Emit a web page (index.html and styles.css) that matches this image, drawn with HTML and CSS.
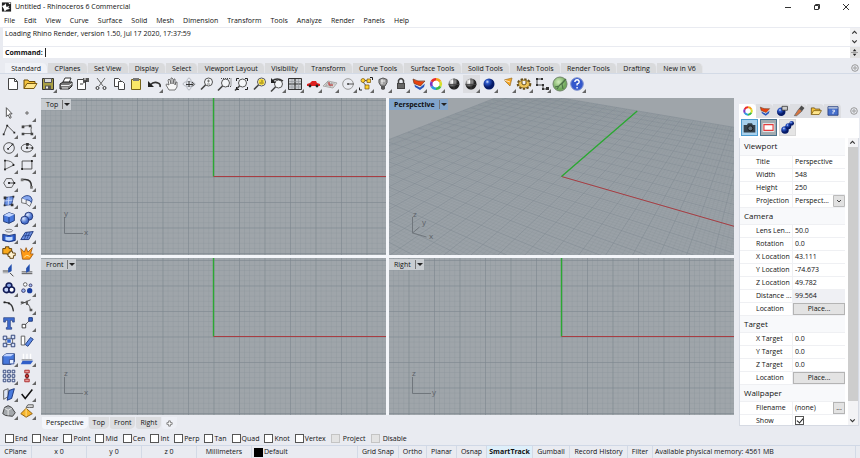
FILE: index.html
```html
<!DOCTYPE html>
<html lang="en">

<head>
  <meta charset="UTF-8">
  <title>Untitled - Rhinoceros 6 Commercial</title>
  <link rel="stylesheet" href="styles.css">
</head>

<body class="app">

  <!-- Shared shapes -->
  <svg class="defs" aria-hidden="true">
    <defs>
      <radialGradient id="g-grey" cx="35%" cy="30%"><stop offset="0" stop-color="#fff"/><stop offset=".5" stop-color="#999"/><stop offset="1" stop-color="#222"/></radialGradient>
      <radialGradient id="g-blue" cx="35%" cy="30%"><stop offset="0" stop-color="#d5e4ff"/><stop offset=".35" stop-color="#2c57c8"/><stop offset="1" stop-color="#061a66"/></radialGradient>
      <radialGradient id="g-soft" cx="35%" cy="30%"><stop offset="0" stop-color="#dce8ff"/><stop offset="1" stop-color="#4a72cd"/></radialGradient>
      <radialGradient id="g-green" cx="40%" cy="35%"><stop offset="0" stop-color="#d2edbb"/><stop offset="1" stop-color="#71a95c"/></radialGradient>
      <pattern id="p-minor" width="5.1" height="5.1" patternUnits="userSpaceOnUse"><path d="M0 0H5.1M0 0V5.1" stroke="#868f96" stroke-width=".5"/></pattern>
      <pattern id="p-major" width="25.5" height="25.5" patternUnits="userSpaceOnUse"><path d="M0 0H25.5M0 0V25.5" stroke="#7b858d" stroke-width="1"/></pattern>
      <symbol id="i-lens" viewBox="0 0 18 18"><circle cx="10.500" cy="7" r="4" fill="#f4f6f8" stroke="#555"/><path d="M7.500 10 3 14.500" stroke="#444" stroke-width="1.600"/></symbol>
      <symbol id="i-wheel" viewBox="0 0 18 18">
        <circle cx="9" cy="9" r="3.500" fill="#fff"/>
        <g fill="none" stroke-width="2.600"><path d="M9 4.200A4.800 4.800 0 0 1 13.200 6.600" stroke="#f5a21c"/><path d="M13.200 6.600A4.800 4.800 0 0 1 13.200 11.400" stroke="#d8e02a"/><path d="M13.200 11.400A4.800 4.800 0 0 1 9 13.800" stroke="#3dbb45"/><path d="M9 13.800A4.800 4.800 0 0 1 4.800 11.400" stroke="#2c9be0"/><path d="M4.800 11.400A4.800 4.800 0 0 1 4.800 6.600" stroke="#7c36c4"/><path d="M4.800 6.600A4.800 4.800 0 0 1 9 4.200" stroke="#ea2a2a"/></g>
      </symbol>
      <symbol id="i-layers" viewBox="0 0 18 18"><path d="M4 8l1 4 5 3 4-3 1-4-5 3z" fill="#2554bb"/><path d="M3 6l1 3.500 6 3 5-4V6l-5 4z" fill="#f4f4f4"/><path d="M3 4q4 3 12 2l-4.500 5L4 8.500z" fill="#e8420e" stroke="#6a3a20" stroke-width=".7"/></symbol>
      <symbol id="i-ball" viewBox="0 0 18 18"><circle cx="9" cy="9" r="5.500" fill="url(#g-grey)"/><path d="M9 3.500v11M3.500 9.500h11" stroke="#444" stroke-width=".8" fill="none"/><path d="M6 5v4M7.500 4.500v4" stroke="#fff" stroke-width=".8"/></symbol>
      <symbol id="i-folder" viewBox="0 0 18 18"><path d="M3 13.500V5h4l1 1.500h6V9" fill="#f5c33b" stroke="#6a4a08"/><path d="M3 13.500 6 8.500h10l-3 5z" fill="#ffe58a" stroke="#7c5a0d"/></symbol>
    </defs>
  </svg>

  <header class="titlebar">
    <svg class="logo" viewBox="0 0 12 12"><path d="M1 1h10v10H1z" fill="#222"/><path d="M1 5q3 0 4-3l1 4 3-1-1 2 2 1-4 1-2 2-1-3zM8 1l1 2 2-1z" fill="#fff"/></svg>
    <h1 class="title">Untitled - Rhinoceros 6 Commercial</h1>
    <div class="window-buttons">
      <button aria-label="Minimize"><svg viewBox="0 0 8 8"><path d="M1 4.500h6"/></svg></button>
      <button aria-label="Restore"><svg viewBox="0 0 8 8"><path d="M1.500 2.500h4v4h-4zM2.500 2.500v-1h4v4h-1"/></svg></button>
      <button aria-label="Close"><svg viewBox="0 0 8 8"><path d="M1 1l6 6M7 1 1 7"/></svg></button>
    </div>
  </header>

  <nav class="menu">
    <a href="#">File</a><a href="#">Edit</a><a href="#">View</a><a href="#">Curve</a><a href="#">Surface</a><a href="#">Solid</a><a href="#">Mesh</a><a href="#">Dimension</a><a href="#">Transform</a><a href="#">Tools</a><a href="#">Analyze</a><a href="#">Render</a><a href="#">Panels</a><a href="#">Help</a>
  </nav>

  <section class="command">
    <div class="history">
      <p>Loading Rhino Render, version 1.50, Jul 17 2020, 17:37:59</p>
      <div class="history-scroll">
        <button aria-label="Scroll up"><svg viewBox="0 0 8 8"><path d="M2 5l2-2 2 2"/></svg></button>
        <button aria-label="Scroll down"><svg viewBox="0 0 8 8"><path d="M2 3l2 2 2-2"/></svg></button>
      </div>
    </div>
    <div class="prompt">
      <label for="command">Command:</label>
      <span class="caret"></span>
      <input id="command" type="text">
      <button class="spinner" aria-label="Command list"><svg viewBox="0 0 8 10"><path d="M2 3.500 4 1l2 2.500zM2 6.500 4 9l2-2.500z" fill="#222"/><path d="M0 5h8" stroke="#999"/></svg></button>
    </div>
  </section>

  <div class="tabs">
    <div class="tab-list">
      <button class="tab tab-active">Standard</button><button class="tab">CPlanes</button><button class="tab">Set View</button><button class="tab">Display</button><button class="tab">Select</button><button class="tab">Viewport Layout</button><button class="tab">Visibility</button><button class="tab">Transform</button><button class="tab">Curve Tools</button><button class="tab">Surface Tools</button><button class="tab">Solid Tools</button><button class="tab">Mesh Tools</button><button class="tab">Render Tools</button><button class="tab">Drafting</button><button class="tab">New in V6</button>
    </div>
    <button class="options" aria-label="Options"><svg viewBox="0 0 10 10"><circle cx="5" cy="5" r="3.300"/><circle cx="5" cy="5" r="1.200"/></svg></button>
  </div>

  <div class="toolbar">
    <button class="tool" aria-label="New"><svg viewBox="0 0 18 18"><path d="M4.500 3.500h6l3 3v8h-9z" fill="#fff" stroke="#444"/><path d="M10.500 3.500v3h3" stroke="#444" fill="none"/></svg></button>
    <button class="tool" aria-label="Open"><svg viewBox="0 0 18 18"><use href="#i-folder"/></svg></button>
    <button class="tool fly" aria-label="Save"><svg viewBox="0 0 18 18"><path d="M3.500 3.500h11v11h-11z" fill="#a99f43" stroke="#333"/><path d="M5.500 3.500h7v4h-7z" fill="#ddd" stroke="#555"/><path d="M6 10.500h6v4H6z" fill="#555"/><path d="M7 11.500h2v2H7z" fill="#eee"/></svg></button>
    <button class="tool" aria-label="Print"><svg viewBox="0 0 18 18"><path d="M6 7 8 3h6l-2 5" fill="#fff" stroke="#333"/><path d="M3 9l3-2h9v4l-3 3H3z" fill="#777" stroke="#222"/><path d="M4 10.500h8l3-2M5 13h6" stroke="#eee" fill="none"/></svg></button>
    <button class="tool" aria-label="Properties"><svg viewBox="0 0 18 18"><path d="M3.500 4.500h8v10h-8z" fill="#fff" stroke="#444"/><path d="M9 3h6v4H9z" fill="#555"/><path d="M9 8 13 6M6 9h3" stroke="#333"/><path d="M10 4h2" stroke="#fff"/></svg></button>
    <button class="tool" aria-label="Cut"><svg viewBox="0 0 18 18"><path d="M5 3l6 8M13 3l-6 8" stroke="#666"/><g fill="none" stroke="#333"><circle cx="5.500" cy="13" r="1.500"/><circle cx="12.500" cy="13" r="1.500"/></g></svg></button>
    <button class="tool" aria-label="Copy"><svg viewBox="0 0 18 18"><g fill="#fff" stroke="#444"><path d="M4.500 3.500h4l2 2v6h-6z"/><path d="M8.500 6.500h4l2 2v6h-6z"/></g></svg></button>
    <button class="tool" aria-label="Paste"><svg viewBox="0 0 18 18"><path d="M4.500 4.500h9v10h-9z" fill="#f9e867" stroke="#76631a"/><path d="M6 3h6v3H6z" fill="#777"/></svg></button>
    <button class="tool fly" aria-label="Undo"><svg viewBox="0 0 18 18"><path d="M5 10q4-4 8-2 3 1 2 4" fill="none" stroke="#333" stroke-width="1.600"/><path d="M3 6v6h6z" fill="#222"/></svg></button>
    <button class="tool" aria-label="Pan"><svg viewBox="0 0 18 18"><path d="M6 15 3 10q0-1 1-1l2 1-1-5 1-1 1 1 1 4V3h1l1 1v5l1-5h1v6l1-3h1v5l-2 3z" fill="#f7f7f7" stroke="#555" stroke-width=".8"/></svg></button>
    <button class="tool" aria-label="Rotate view"><svg viewBox="0 0 18 18"><g fill="none" stroke="#b4b8c0"><ellipse cx="9" cy="9" rx="6" ry="2.500"/><ellipse cx="9" cy="9" rx="2.500" ry="6"/></g><path d="M9 6v6M6 9.500h7M12 7l2 2.500-2 2" fill="none" stroke="#333"/></svg></button>
    <button class="tool" aria-label="Zoom dynamic"><svg viewBox="0 0 18 18"><use href="#i-lens"/><path d="M9 6h3M10.500 4.500v3M9 9h3" stroke="#555" stroke-width=".7"/></svg></button>
    <button class="tool" aria-label="Zoom window"><svg viewBox="0 0 18 18"><path d="M5 3.500h10v8H9" fill="none" stroke="#444" stroke-dasharray="1 1"/><use href="#i-lens" x="-1" y="1"/></svg></button>
    <button class="tool" aria-label="Zoom extents"><svg viewBox="0 0 18 18"><use href="#i-lens" x="-1" y="1"/><path d="M3.500 6V3.500H6M12 3.500h2.500V6M14.500 12v2.500H12M3.500 12v2.500H6" fill="none" stroke="#222"/></svg></button>
    <button class="tool" aria-label="Zoom selected"><svg viewBox="0 0 18 18"><use href="#i-lens"/><circle cx="10.500" cy="7" r="3" fill="#f4d832"/><path d="M8.500 8h4M10 6h2" stroke="#86761d"/></svg></button>
    <button class="tool fly" aria-label="Undo view"><svg viewBox="0 0 18 18"><use href="#i-lens" y="2"/><path d="M4 6q5-4 11 0" fill="none" stroke="#333" stroke-width="1.400"/><path d="M3 3v5h5z" fill="#222"/></svg></button>
    <button class="tool fly" aria-label="Four viewports"><svg viewBox="0 0 18 18"><path d="M2.500 3.500h13v11h-13z" fill="#c9ccd0" stroke="#333"/><path d="M9 3v12M2 9h14" stroke="#333" stroke-width="1.200"/><path d="M6 4v10M12.500 4v10M3 6.500h12M3 12h12" stroke="#92969a" stroke-width=".6"/></svg></button>
    <button class="tool fly" aria-label="Set view"><svg viewBox="0 0 18 18"><path d="M3 9l3-1 2-2h4l1 2 3 1v2H3z" fill="#dd2020"/><circle cx="6" cy="11" r="1.400" fill="#222"/><circle cx="13" cy="11" r="1.400" fill="#222"/></svg></button>
    <button class="tool fly" aria-label="Set CPlane"><svg viewBox="0 0 18 18"><path d="M2 11l5-5 9 2-4 5z" fill="#ddd" stroke="#aaa"/><path d="M4 10l8 1M6 8l8 1M7 6l-2 5M11 7l-2 5" stroke="#999" stroke-width=".6"/><path d="M8 10V7M8 10h4" stroke="#b22"/></svg></button>
    <button class="tool fly" aria-label="Object snap"><svg viewBox="0 0 18 18"><circle cx="9" cy="9" r="5.300" fill="none" stroke="#999"/><path d="M9 9h6" stroke="#555"/><circle cx="9" cy="9" r="1" fill="#444"/></svg></button>
    <button class="tool fly" aria-label="Select"><svg viewBox="0 0 18 18"><path d="M6 5l5 1M6 7l4 5" stroke="#555"/><g fill="#ffd22e" stroke="#77500b" stroke-width=".7"><circle cx="6" cy="5.500" r="2"/><path d="M10 4h3.500v3.500H10zM8 10h4v4H8z"/></g><path d="M13 2.500h2.500V5M2.500 12.500V15H5" fill="none" stroke="#222"/></svg></button>
    <button class="tool fly" aria-label="Hide"><svg viewBox="0 0 18 18"><path d="M7 11Q4 8 5 4.500q4-3 8 0 1 3-2 6.500z" fill="#a2a2a2" stroke="#555"/><path d="M7 11h4v3l-2 1-2-1z" fill="#555"/><path d="M7 6h4M8 4v5" stroke="#eee"/></svg></button>
    <button class="tool fly" aria-label="Lock"><svg viewBox="0 0 18 18"><path d="M6.500 9V5.500q2.500-4 5 0V9" fill="none" stroke="#444" stroke-width="1.500"/><path d="M5 8h8v6H5z" fill="#444"/><path d="M6 10h6M6 12h6" stroke="#888"/></svg></button>
    <button class="tool fly" aria-label="Layers"><svg viewBox="0 0 18 18"><use href="#i-layers"/></svg></button>
    <button class="tool fly" aria-label="Object color"><svg viewBox="0 0 18 18"><use href="#i-wheel"/></svg></button>
    <button class="tool" aria-label="Shade"><svg viewBox="0 0 18 18"><use href="#i-ball"/></svg></button>
    <button class="tool fly tool-on" aria-label="Shaded view"><svg viewBox="0 0 18 18"><use href="#i-ball"/></svg></button>
    <button class="tool fly" aria-label="Render"><svg viewBox="0 0 18 18"><circle cx="9" cy="9" r="5.500" fill="url(#g-blue)"/></svg></button>
    <button class="tool fly" aria-label="Lights"><svg viewBox="0 0 18 18"><path d="M6 5l8-2-2 8z" fill="#f6a521" stroke="#99702a" stroke-width=".7"/><path d="M6 5l6 2" stroke="#fff" stroke-width=".7"/></svg></button>
    <button class="tool fly" aria-label="Options"><svg viewBox="0 0 18 18"><ellipse cx="9" cy="9" rx="6" ry="4.500" fill="none" stroke="#68501a" stroke-width="2.600" stroke-dasharray="2.200 1.300"/><ellipse cx="9" cy="9" rx="5.500" ry="4" fill="#efc557" stroke="#68501a" stroke-width=".7"/><path d="M7 6v3q2 2 4 0V6" fill="#f4f4f4" stroke="#68501a"/></svg></button>
    <button class="tool fly" aria-label="Dimensions"><svg viewBox="0 0 18 18"><path d="M4 4h5M4 4v6h6v4h5" fill="none" stroke="#444"/><path d="M3 3h2v2H3zM8 3h2v2H8zM3 9h2v2H3zM9 9h2v2H9zM9 13h2v2H9zM13 12h3v3h-3z" fill="#333"/></svg></button>
    <button class="tool" aria-label="Grasshopper"><svg viewBox="0 0 18 18"><circle cx="9" cy="9" r="7" fill="url(#g-green)" stroke="#71856a"/><path d="M4 12l4-1 7-7-4 5 1 5M8 11l-2 3" fill="none" stroke="#4d7347" stroke-width="1.200"/></svg></button>
    <button class="tool fly" aria-label="Help"><svg viewBox="0 0 18 18"><circle cx="9" cy="9" r="6.300" fill="#3458cc" stroke="#8293cf"/><path d="M6.800 7q.3-2.300 2.300-2.300T11.200 7q0 1.300-2.100 2v1.500M9.100 12v1.500" fill="none" stroke="#fff" stroke-width="1.400"/></svg></button>
  </div>

  <main class="workspace">
    <div class="palette">
      <button class="tool" aria-label="Select objects"><svg viewBox="0 0 18 18"><path d="M6 3v10l2-2 2 4 1.500-1-2-4h3z" fill="#fff" stroke="#444"/></svg></button>
      <button class="tool fly" aria-label="Point"><svg viewBox="0 0 18 18"><circle cx="9" cy="9" r="1.300" fill="#fff" stroke="#444"/></svg></button>
      <button class="tool fly" aria-label="Polyline"><svg viewBox="0 0 18 18"><path d="M3 14 7 4l8 8" fill="none" stroke="#444"/><path d="M2 13h2v2H2zM6 3h2v2H6zM14 11h2v2h-2z" fill="#222"/></svg></button>
      <button class="tool fly" aria-label="Curve"><svg viewBox="0 0 18 18"><path d="M4 5q9-2 10 1-1 2 0 7H4" fill="none" stroke="#555"/><path d="M3 4h3v3H3zM11 3h3v3h-3zM13 12h3v3h-3zM3 12h3v3H3z" fill="#444"/></svg></button>
      <button class="tool fly" aria-label="Circle"><svg viewBox="0 0 18 18"><circle cx="9" cy="9" r="6" fill="none" stroke="#444"/><path d="M8 10l5-5" stroke="#333"/><path d="M7 9h2v2H7zM12 4h2v2h-2z" fill="#333"/></svg></button>
      <button class="tool fly" aria-label="Ellipse"><svg viewBox="0 0 18 18"><ellipse cx="9" cy="9" rx="6.500" ry="4.500" fill="none" stroke="#444"/><path d="M9 5v4h6" fill="none" stroke="#777"/><path d="M8 3.500h3v3H8zM8 8h2v2H8zM14 8h2v2h-2z" fill="#333"/></svg></button>
      <button class="tool fly" aria-label="Arc"><svg viewBox="0 0 18 18"><path d="M4.500 4v11M4.500 4q8 0 10 5L4.500 14" fill="none" stroke="#555"/><path d="M3.500 3h2v2h-2zM3.500 13h2v2h-2zM13 8h2v2h-2z" fill="#222"/></svg></button>
      <button class="tool fly" aria-label="Rectangle"><svg viewBox="0 0 18 18"><path d="M3.500 4.500h11v9h-11z" fill="none" stroke="#444"/><path d="M2.500 12.500h2v2h-2zM13.500 3.500h2v2h-2z" fill="#222"/></svg></button>
      <button class="tool fly" aria-label="Polygon"><svg viewBox="0 0 18 18"><path d="M6 4h6l3 5-3 5H6L3 9z" fill="none" stroke="#555"/><path d="M9 9h5" stroke="#333"/><path d="M8 8h2v2H8zM14 8h2v2h-2z" fill="#222"/></svg></button>
      <button class="tool fly" aria-label="Fillet"><svg viewBox="0 0 18 18"><path d="M3 5h4q7 0 7 8" fill="none" stroke="#333" stroke-width="1.800"/><path d="M2 4h3v3H2zM12.500 12.500h3v3h-3z" fill="#777"/></svg></button>
      <button class="tool fly" aria-label="Surface from points"><svg viewBox="0 0 18 18"><path d="M5 5l9-1-2 9-8 1z" fill="#6e95e6" stroke="#223c80"/><path d="M4 9l9-1M9 4 8 14" stroke="#cddafb"/><path d="M3 4h3v3H3zM13 3h2v2h-2zM11 12h3v3h-3zM3 13h2v2H3z" fill="#333"/></svg></button>
      <button class="tool fly" aria-label="Patch"><svg viewBox="0 0 18 18"><path d="M3 6q5-5 10-2 3 3 1 7-2-4-7-3z" fill="#86a7ee" stroke="#233e82"/><path d="M3 6v5l5 1V8M8 12l4 3 2-4" fill="#f4f6fb" stroke="#444" stroke-width=".8"/></svg></button>
      <button class="tool fly" aria-label="Box"><svg viewBox="0 0 18 18"><path d="M3 6l6-3 6 2v7l-6 3-6-2z" fill="#4a79dd" stroke="#16306f"/><path d="M3 6l6 2 6-3-6-2z" fill="#c2d5ff"/><path d="M9 8v7" stroke="#16306f"/></svg></button>
      <button class="tool fly" aria-label="Boolean union"><svg viewBox="0 0 18 18"><g fill="url(#g-soft)" stroke="#182c70"><circle cx="11" cy="7" r="4.500"/><circle cx="6.500" cy="11.500" r="4.500"/></g></svg></button>
      <button class="tool fly" aria-label="Loft"><svg viewBox="0 0 18 18"><ellipse cx="9" cy="3" rx="4" ry="1.600" fill="none" stroke="#777"/><path d="M2 7q7 3 14 0v7q-7 3-14 0z" fill="#2b5bca" stroke="#162f74"/><path d="M5 9.500q4 1.500 8 0v4q-4 1.500-8 0z" fill="#c2dbff"/></svg></button>
      <button class="tool fly" aria-label="Surface tools"><svg viewBox="0 0 18 18"><path d="M2 13 7 5l9-1-5 9z" fill="#6d91e2" stroke="#173177"/><path d="M5 9l8-1M9 5 6 13M12 5l-3 7" stroke="#173177" stroke-width=".7"/></svg></button>
      <button class="tool" aria-label="Explode"><svg viewBox="0 0 18 18"><path d="M2 4h3V2h4v2h3v5h-2v2H7v-1H2z" fill="#f9a91c" stroke="#593a04"/><path d="M8 9h2V7h3v2h3v3h-2v3h-4v-2H8z" fill="#fff2d1" stroke="#593a04"/></svg></button>
      <button class="tool" aria-label="Split burst"><svg viewBox="0 0 18 18"><path d="M4 16 2 4l4 4 2-5 2 5 5-5-2 7h3l-4 6z" fill="#ff9b17" stroke="#8c4909" stroke-width=".8"/><path d="M6 14q2-4 6-1" stroke="#fff1a6" fill="none"/></svg></button>
      <button class="tool" aria-label="Trim"><svg viewBox="0 0 18 18"><path d="M2 9h9M10 11l4 4" stroke="#333"/><path d="M12 1v8l-4 2V6z" fill="#2450ae"/><path d="M2 11h6" stroke="#999"/></svg></button>
      <button class="tool" aria-label="Split"><svg viewBox="0 0 18 18"><path d="M3 10h12M3 12h12" stroke="#444"/><path d="M12 1v8l-4 2V6z" fill="#2450ae"/></svg></button>
      <button class="tool fly" aria-label="Group"><svg viewBox="0 0 18 18"><circle cx="9" cy="6.500" r="3.200" fill="#88a4e5" stroke="#111b55" stroke-width="1.800"/><circle cx="6" cy="11" r="3.200" fill="#c3d2f8" stroke="#111b55" stroke-width="1.800"/><circle cx="12" cy="11" r="3.200" fill="#fff" stroke="#111b55" stroke-width="1.800"/></svg></button>
      <button class="tool fly" aria-label="Ungroup"><svg viewBox="0 0 18 18"><circle cx="7" cy="5" r="2" fill="#fff" stroke="#555"/><circle cx="13" cy="6" r="1.600" fill="#aac0f2" stroke="#336"/><circle cx="5" cy="12" r="2" fill="#9ab4ef" stroke="#336"/><circle cx="12" cy="12" r="3" fill="#173c9e"/></svg></button>
      <button class="tool" aria-label="Join curve"><svg viewBox="0 0 18 18"><path d="M3 5q10-1 11 10" fill="none" stroke="#333" stroke-width="1.300"/><path d="M3 4h2v2H3zM8 5h2v2H8z" fill="#222"/></svg></button>
      <button class="tool fly" aria-label="Edit points"><svg viewBox="0 0 18 18"><path d="M3 5q9-1 10 9M2 7l11-5" fill="none" stroke="#444"/><path d="M2 4h3v2H2zM8 3h2v5H8zM12 12h3v3h-3z" fill="#555"/></svg></button>
      <button class="tool" aria-label="Text"><svg viewBox="0 0 18 18"><path d="M3 3h12v5h-2V6h-2.500v8H12v2H6v-2h1.500V6H5v2H3z" fill="#416fd2" stroke="#172f72" stroke-width=".7"/></svg></button>
      <button class="tool fly" aria-label="Move"><svg viewBox="0 0 18 18"><path d="M6 12l6-6" stroke="#555"/><path d="M3.500 10.500h4v4h-4z" fill="#fff" stroke="#333"/><path d="M11 3h4v4h-4z" fill="#3668cf" stroke="#172f72"/></svg></button>
      <button class="tool" aria-label="Copy objects"><svg viewBox="0 0 18 18"><path d="M5 6h8v7H6z" fill="none" stroke="#666"/><g fill="#d8e3fc" stroke="#23366d"><path d="M2.500 3.500h4v4h-4zM11.500 2.500h4v4h-4zM2.500 11.500h4v4h-4zM11.500 11.500h4v4h-4z"/></g><path d="M7 7h4v4H7z" fill="#3668cf"/></svg></button>
      <button class="tool" aria-label="Rotate"><svg viewBox="0 0 18 18"><path d="M2.500 3.500h4v10h-4z" fill="#fff" stroke="#555"/><path d="M7 13l6-8 3 2-6 8z" fill="#5d8ae6" stroke="#173378"/></svg></button>
      <button class="tool fly" aria-label="Solid edit"><svg viewBox="0 0 18 18"><path d="M2 6l4-3h9v9l-4 3H2z" fill="#4778dc" stroke="#162e6c"/><path d="M2 6l4-3h9l-4 3z" fill="#bfd2ff"/><path d="M9.500 9.500h5v5h-5z" fill="#e6eeff" stroke="#34509a"/></svg></button>
      <button class="tool fly" aria-label="Project"><svg viewBox="0 0 18 18"><path d="M5 3v6M9 3v6M13 3v6" stroke="#fff" stroke-width="1.500"/><path d="M3 10h12" stroke="#777"/><path d="M2 15l2-4h12l-3 4z" fill="#315fc8"/></svg></button>
      <button class="tool fly" aria-label="Array"><svg viewBox="0 0 18 18"><g fill="#e1e9fa" stroke="#2b3e74"><path d="M2.500 2.500h3v3h-3zM7.500 2.500h3v3h-3zM12.500 2.500h3v3h-3zM2.500 7.500h3v3h-3zM7.500 7.500h3v3h-3zM12.500 7.500h3v3h-3zM2.500 12.500h3v3h-3zM7.500 12.500h3v3h-3zM12.500 12.500h3v3h-3z"/></g></svg></button>
      <button class="tool fly" aria-label="Align"><svg viewBox="0 0 18 18"><path d="M9 3v12" stroke="#333"/><path d="M6.500 2.500h5v3h-5zM6.500 12.500h5v3h-5z" fill="#e8a0a0" stroke="#a22"/><circle cx="9" cy="9" r="2" fill="#c33" stroke="#611"/></svg></button>
      <button class="tool fly" aria-label="Flow"><svg viewBox="0 0 18 18"><path d="M3 5l5-2v9l-5 3z" fill="#dfe7f6" stroke="#555"/><path d="M9 5l6-2-3 11-5 2z" fill="#4a7bde" stroke="#152f75"/></svg></button>
      <button class="tool fly" aria-label="Check"><svg viewBox="0 0 18 18"><path d="M3 9l4 5 8-10" fill="none" stroke="#111" stroke-width="1.700"/></svg></button>
      <button class="tool fly" aria-label="Mesh"><svg viewBox="0 0 18 18"><path d="M2 12l2-7 4-2 4 2 4 6-3 4-8-1z" fill="#a4a8ac" stroke="#333"/><path d="M4 6l4 2 4-2M8 8v6" stroke="#eee" fill="none"/></svg></button>
      <button class="tool fly" aria-label="Render preview"><svg viewBox="0 0 18 18"><path d="M8 5l2-3h6v3h-4z" fill="#ddd" stroke="#555"/><path d="M2 12l6-6 7 6-7 4z" fill="#f6b42a" stroke="#86570c"/><path d="M8 6v9" stroke="#ffe59b"/></svg></button>
    </div>

    <div class="stage">
      <div class="viewports">
        <section class="viewport">
          <svg class="canvas" viewBox="-172.5 -78.5 345 157" preserveAspectRatio="xMidYMid slice">
            <path d="M-600-400h1200v800h-1200z" fill="url(#p-minor)"/><path d="M-600-400h1200v800h-1200z" fill="url(#p-major)"/>
            <path d="M0 0V-400" class="axis-green"/><path d="M0 0H600" class="axis-red"/>
          </svg>
          <svg class="gizmo" viewBox="0 0 32 28"><path d="M3.500 8v16.500H22"/><text x="3" y="7">y</text><text x="23" y="26">x</text></svg>
          <button class="view-label">Top<i></i></button>
        </section>
        <section class="viewport">
          <svg class="canvas" viewBox="-172.5 -78.5 345 157" preserveAspectRatio="xMidYMid slice">
            <path id="persp-plane" fill="#9aa1a7"/>
            <path id="persp-minor" class="line-minor"/><path id="persp-major" class="line-major"/>
            <path id="persp-x" class="axis-red"/><path id="persp-y" class="axis-green"/>
          </svg>
          <svg class="gizmo" viewBox="0 0 32 28"><path d="M3.500 8v16l14 4M3.500 24l7-6"/><text x="4" y="8">z</text><text x="13" y="16">y</text><text x="20" y="30">x</text></svg>
          <button class="view-label view-active">Perspective<i></i></button>
        </section>
        <section class="viewport">
          <svg class="canvas" viewBox="-172.5 -78.5 345 157" preserveAspectRatio="xMidYMid slice">
            <path d="M-600-400h1200v800h-1200z" fill="url(#p-minor)"/><path d="M-600-400h1200v800h-1200z" fill="url(#p-major)"/>
            <path d="M0 0V-400" class="axis-green"/><path d="M0 0H600" class="axis-red"/>
          </svg>
          <svg class="gizmo" viewBox="0 0 32 28"><path d="M3.500 8v16.500H22"/><text x="3" y="7">z</text><text x="23" y="26">x</text></svg>
          <button class="view-label">Front<i></i></button>
        </section>
        <section class="viewport">
          <svg class="canvas" viewBox="-172.5 -78.5 345 157" preserveAspectRatio="xMidYMid slice">
            <path d="M-600-400h1200v800h-1200z" fill="url(#p-minor)"/><path d="M-600-400h1200v800h-1200z" fill="url(#p-major)"/>
            <path d="M0 0V-400" class="axis-green"/><path d="M0 0H600" class="axis-red"/>
          </svg>
          <svg class="gizmo" viewBox="0 0 32 28"><path d="M3.500 8v16.500H22"/><text x="3" y="7">z</text><text x="23" y="26">y</text></svg>
          <button class="view-label">Right<i></i></button>
        </section>
      </div>
      <div class="view-tabs">
        <button class="view-tab view-tab-active">Perspective</button><button class="view-tab">Top</button><button class="view-tab">Front</button><button class="view-tab">Right</button><button class="view-tab view-tab-add" aria-label="Add viewport"><svg viewBox="0 0 8 8"><path d="M3 1h2v2h2v2H5v2H3V5H1V3h2z"/></svg></button>
      </div>
    </div>

    <aside class="panel">
      <div class="panel-tabs">
        <button aria-label="Color"><svg viewBox="0 0 18 18"><use href="#i-wheel"/></svg></button>
        <button aria-label="Layers"><svg viewBox="0 0 18 18"><use href="#i-layers"/></svg></button>
        <button aria-label="Rendering"><svg viewBox="0 0 18 18"><circle cx="8" cy="10" r="5.500" fill="url(#g-blue)"/><path d="M9 3h7v5H9z" fill="#ccc" stroke="#333"/></svg></button>
        <button aria-label="Materials"><svg viewBox="0 0 18 18"><path d="M3 15 9 6l4 3-7 6z" fill="#d9733c" stroke="#666"/><path d="M9 6l3-4 4 3-3 4z" fill="#4d4d4d"/></svg></button>
        <button aria-label="Libraries"><svg viewBox="0 0 18 18"><use href="#i-folder"/></svg></button>
        <button aria-label="Help"><svg viewBox="0 0 18 18"><path d="M2.500 3.500h13v11h-13z" fill="#4770cc" stroke="#233a78"/><path d="M3 5h12" stroke="#ddd" stroke-width="1.500"/><path d="M8 8h3v2H9v3" stroke="#fff" fill="none"/></svg></button>
        <button class="options" aria-label="Panel options"><svg viewBox="0 0 10 10"><circle cx="5" cy="5" r="3.300"/><circle cx="5" cy="5" r="1.200"/></svg></button>
      </div>
      <div class="panel-modes">
        <button class="mode mode-on" aria-label="Camera"><svg viewBox="0 0 18 18"><path d="M2 6h4l1-2h5l1 2h3v9H2z" fill="#33404a"/><circle cx="10" cy="10" r="3" fill="#637482" stroke="#111"/></svg></button>
        <button class="mode mode-mid" aria-label="Viewport"><svg viewBox="0 0 18 18"><path d="M2 4h14v10H2z" fill="#fff"/><path d="M3.500 5.500h11v7h-11z" fill="#fff" stroke="#e23c3c" stroke-width="1.400"/></svg></button>
        <button class="mode" aria-label="Objects"><svg viewBox="0 0 18 18"><circle cx="6" cy="12" r="4.500" fill="url(#g-blue)"/><circle cx="10" cy="7.500" r="3.500" fill="url(#g-blue)"/><circle cx="14" cy="4" r="2.800" fill="url(#g-blue)"/></svg></button>
      </div>
      <div class="panel-body">
        <div class="props">
          <table>
            <tbody>
              <tr class="group"><th colspan="2">Viewport</th></tr>
              <tr><th>Title</th><td>Perspective</td></tr>
              <tr><th>Width</th><td>548</td></tr>
              <tr><th>Height</th><td>250</td></tr>
              <tr><th><label for="projection">Projection</label></th><td class="cell-field"><select id="projection"><option>Perspect...</option></select></td></tr>
              <tr class="group"><th colspan="2">Camera</th></tr>
              <tr><th>Lens Len...</th><td>50.0</td></tr>
              <tr><th>Rotation</th><td>0.0</td></tr>
              <tr><th>X Location</th><td>43.111</td></tr>
              <tr><th>Y Location</th><td>-74.673</td></tr>
              <tr><th>Z Location</th><td>49.782</td></tr>
              <tr><th>Distance ...</th><td class="readonly">99.564</td></tr>
              <tr><th>Location</th><td class="cell-field"><button class="place">Place...</button></td></tr>
              <tr class="group"><th colspan="2">Target</th></tr>
              <tr><th>X Target</th><td>0.0</td></tr>
              <tr><th>Y Target</th><td>0.0</td></tr>
              <tr><th>Z Target</th><td>0.0</td></tr>
              <tr><th>Location</th><td class="cell-field"><button class="place">Place...</button></td></tr>
              <tr class="group"><th colspan="2">Wallpaper</th></tr>
              <tr><th>Filename</th><td class="cell-file"><div>(none)<button class="browse">...</button></div></td></tr>
              <tr><th><label for="show">Show</label></th><td><input id="show" type="checkbox" checked></td></tr>
            </tbody>
          </table>
        </div>
        <div class="scrollbar">
          <button aria-label="Scroll up"><svg viewBox="0 0 8 8"><path d="M2 5l2-2 2 2"/></svg></button>
          <div class="thumb"></div>
          <button aria-label="Scroll down"><svg viewBox="0 0 8 8"><path d="M2 3l2 2 2-2"/></svg></button>
        </div>
      </div>
    </aside>
  </main>

  <div class="osnaps">
    <label><input type="checkbox">End</label>
    <label><input type="checkbox">Near</label>
    <label><input type="checkbox">Point</label>
    <label><input type="checkbox">Mid</label>
    <label><input type="checkbox">Cen</label>
    <label><input type="checkbox">Int</label>
    <label><input type="checkbox">Perp</label>
    <label><input type="checkbox">Tan</label>
    <label><input type="checkbox">Quad</label>
    <label><input type="checkbox">Knot</label>
    <label><input type="checkbox">Vertex</label>
    <label class="wide"><input type="checkbox" disabled>Project</label>
    <label class="wide"><input type="checkbox" disabled>Disable</label>
  </div>

  <footer class="status">
    <button class="w-32">CPlane</button>
    <span class="w-55">x 0</span>
    <span class="w-55">y 0</span>
    <span class="w-55">z 0</span>
    <span class="w-55">Millimeters</span>
    <button class="layer"><i class="swatch"></i>Default</button>
    <button class="w-41">Grid Snap</button>
    <button class="w-28">Ortho</button>
    <button class="w-30">Planar</button>
    <button class="w-30">Osnap</button>
    <button class="w-46 status-on">SmartTrack</button>
    <button class="w-37">Gumball</button>
    <button class="w-58">Record History</button>
    <button class="w-25">Filter</button>
    <span class="memory">Available physical memory: 4561 MB</span>
  </footer>

  <script src="grid.js"></script>
</body>

</html>
```

FILE: styles.css
```css
* {
  box-sizing: border-box;
}

.app {
  margin: 0;
  height: 100vh;
  min-height: 458px;
  display: flex;
  flex-direction: column;
  overflow: hidden;
  background: #e9ebf1;
  color: #111;
  font-family: "Open Sans", "Noto Sans", sans-serif;
  font-size: 7px;
  line-height: 12px;
}

button,
input,
select {
  font: inherit;
  color: inherit;
  margin: 0;
}

button {
  padding: 0;
  border: none;
  background: none;
  white-space: nowrap;
}

svg {
  display: block;
}

.defs {
  position: absolute;
  width: 0;
  height: 0;
}

/* Title and menu */
.titlebar {
  display: flex;
  align-items: center;
  height: 14px;
  padding-left: 1px;
  background: #fff;
}

.logo {
  width: 11px;
  height: 12px;
}

.title {
  flex: 1;
  margin: 0 0 0 3px;
  font-size: 7px;
  font-weight: normal;
}

.window-buttons {
  display: flex;
}

.window-buttons button {
  width: 29px;
  display: flex;
  justify-content: center;
}

.window-buttons svg {
  width: 8px;
  height: 8px;
  fill: none;
  stroke: #333;
}

.menu {
  display: flex;
  gap: 9px;
  height: 13px;
  padding-left: 4px;
  background: #fff;
}

.menu a {
  color: inherit;
  text-decoration: none;
  line-height: 13px;
}

/* Command area */
.command {
  padding: 1px 0 5px 3px;
}

.history {
  display: flex;
  height: 18px;
  background: #fff;
}

.history p {
  flex: 1;
  margin: 0;
  padding-left: 2px;
}

.history-scroll {
  width: 10px;
  background: #f1f1f3;
}

.history-scroll button {
  display: block;
  height: 9px;
}

.history-scroll svg,
.scrollbar svg {
  width: 9px;
  height: 9px;
  fill: none;
  stroke: #333;
}

.prompt {
  display: flex;
  align-items: center;
  height: 11px;
  margin-top: 1px;
  padding-left: 2px;
  background: #fff;
}

.prompt label {
  font-weight: bold;
}

.caret {
  width: 1px;
  height: 9px;
  margin-left: 2px;
  background: #222;
}

.prompt input {
  flex: 1;
  height: 10px;
  padding: 0;
  border: none;
  outline: none;
}

.spinner {
  width: 10px;
  height: 11px;
  padding: 1px;
  background: #e1e1e1;
}

.spinner svg {
  height: 9px;
}

/* Toolbar tabs */
.tabs {
  display: flex;
  height: 11px;
  padding-left: 5px;
  border-bottom: 1px solid #d3dae6;
}

.tab-list {
  display: flex;
  flex: 0 1 698px;
}

.tab {
  flex: 1 0 auto;
  padding: 0 6px;
  line-height: 11px;
  background: #d9dadc;
  border-right: 1px solid #e4e5e9;
  border-radius: 0 5px 0 0;
}

.tab-active {
  background: #f0f2f7;
}

.options {
  margin-left: auto;
}

.options svg {
  width: 10px;
  height: 10px;
  fill: none;
  stroke: #999;
}

.toolbar {
  display: flex;
  max-width: 586px;
  height: 24px;
  padding: 1px 0 5px 4px;
}

.tool {
  position: relative;
  display: flex;
  flex: 1;
  align-items: center;
  justify-content: center;
  min-width: 0;
}

.tool svg {
  width: 18px;
  height: 18px;
  flex: none;
}

.tool-on {
  background: #dcdde1;
}

.fly::after {
  content: "";
  position: absolute;
  right: 0;
  bottom: 0;
  border-left: 4px solid transparent;
  border-bottom: 4px solid #666;
}

/* Workspace */
.workspace {
  flex: 1;
  display: flex;
  min-height: 0;
}

.palette {
  display: grid;
  grid-template-columns: 18px 18px;
  grid-auto-rows: 1fr;
  width: 41px;
  padding: 6px 2px 10px 0;
}

.palette .tool {
  min-height: 0;
}

.palette .tool svg {
  width: 16px;
  height: 16px;
}

.stage {
  flex: 1;
  display: flex;
  flex-direction: column;
  min-width: 0;
}

.viewports {
  flex: 1;
  display: grid;
  grid-template-columns: 1fr 1fr;
  grid-template-rows: 1fr 1fr;
  gap: 3px;
  min-height: 0;
  background: #f4f6fa;
}

.viewport {
  position: relative;
  min-height: 0;
  overflow: hidden;
  background: #9fa5aa;
}

.canvas {
  position: absolute;
  width: 100%;
  height: 100%;
}

.axis-red {
  fill: none;
  stroke: #a83d42;
}

.axis-green {
  fill: none;
  stroke: #2ba832;
  stroke-width: 1.4;
}

.line-minor {
  fill: none;
  stroke: #868f96;
  stroke-width: .2;
}

.line-major {
  fill: none;
  stroke: #7f8890;
  stroke-width: .5;
}

.gizmo {
  position: absolute;
  left: 20px;
  bottom: 18px;
  width: 32px;
  height: 28px;
  overflow: visible;
  fill: none;
  stroke: #70767c;
}

.gizmo text {
  fill: #5c6268;
  stroke: none;
  font-size: 8px;
}

.view-label {
  position: absolute;
  top: 1px;
  left: 0;
  display: flex;
  align-items: center;
  height: 11px;
  padding-left: 5px;
  background: #c9cdd1;
}

.view-label i {
  width: 9px;
  height: 9px;
  margin-left: 4px;
  border-left: 1px solid #777;
}

.view-label i::after {
  content: "";
  display: block;
  margin: 3px 0 0 1px;
  width: 0;
  border: 3px solid transparent;
  border-top-color: #222;
}

.view-active {
  background: #82a5cb;
  font-weight: bold;
}

.view-tabs {
  display: flex;
  height: 15px;
  padding: 2px 0 1px 1px;
}

.view-tab {
  padding: 0 4px;
  margin-right: 1px;
  background: #dcdde0;
  border-radius: 0 0 5px 3px;
}

.view-tab-active {
  background: #f4f6fb;
}

.view-tab-add {
  background: #eef0f6;
}

.view-tab-add svg {
  width: 7px;
  height: 7px;
  fill: #fff;
  stroke: #777;
}

/* Properties panel */
.panel {
  display: flex;
  flex-direction: column;
  width: 126px;
  padding: 6px 1px 4px 5px;
}

.panel-tabs {
  display: flex;
  height: 14px;
}

.panel-tabs button {
  width: 17px;
  display: flex;
  align-items: center;
  justify-content: center;
  background: #dddee2;
  border-radius: 0 4px 0 0;
}

.panel-tabs button:first-child {
  background: #fff;
}

.panel-tabs svg {
  width: 14px;
  height: 14px;
}

.panel-tabs .options {
  width: 10px;
  margin-left: auto;
  background: none;
}

.panel-tabs .options svg {
  width: 10px;
  height: 10px;
}

.panel-modes {
  display: flex;
  gap: 2px;
  padding: 1px 2px 2px;
  background: #fff;
}

.mode {
  width: 17px;
  height: 17px;
  border: 1px solid #d7d7d7;
  background: #e5e5e5;
}

.mode-on {
  background: #a7d0ec;
  border-color: #4b9bd0;
}

.mode-mid {
  background: #a3abb0;
  border-color: #4a718b;
}

.panel-body {
  flex: 1;
  display: flex;
  min-height: 0;
  background: #fff;
  border: 1px solid #d6dae3;
  border-top: none;
}

.props {
  flex: 1;
  min-width: 0;
  overflow: hidden;
}

.props table {
  width: 100%;
  border-collapse: collapse;
  table-layout: fixed;
}

.props tr {
  height: 13px;
}

.props th {
  width: 53px;
  padding: 0 0 0 16px;
  border-bottom: 1px solid #eff0f3;
  text-align: left;
  font-weight: normal;
  white-space: nowrap;
}

.props td {
  padding: 0 0 0 2px;
  border-bottom: 1px solid #eff0f3;
  border-left: 1px solid #eff0f3;
}

.props .group {
  height: 17px;
}

.props .group th {
  padding-left: 4px;
  background: #f8f9fb;
  font-size: 8px;
}

.props .readonly {
  background: #eff0f4;
}

.props .cell-field {
  padding: 0;
}

.props select {
  display: block;
  width: 100%;
  height: 12px;
  padding: 0 0 0 2px;
  appearance: none;
  border: none;
  border-radius: 0;
  background: url("data:image/svg+xml,%3Csvg xmlns='http://www.w3.org/2000/svg' width='12' height='12'%3E%3Cpath d='M.5.5h11v11H.5z' fill='%23e1e1e1' stroke='%23bbb'/%3E%3Cpath d='M4 5l2 2 2-2' fill='none' stroke='%23444'/%3E%3C/svg%3E") right center no-repeat;
}

.place {
  display: block;
  width: 100%;
  height: 12px;
  line-height: 10px;
  border: 1px solid #b4b4b4;
  background: #e3e3e3;
}

.cell-file div {
  display: flex;
  justify-content: space-between;
  height: 12px;
}

.browse {
  width: 12px;
  height: 12px;
  line-height: 8px;
  border: 1px solid #b4b4b4;
  background: #e3e3e3;
}

.scrollbar {
  display: flex;
  flex-direction: column;
  width: 10px;
  margin-left: 3px;
  background: #f3f3f5;
}

.thumb {
  flex: 1;
  margin-bottom: 15px;
  background: #cdcdcd;
}

input[type="checkbox"] {
  display: block;
  width: 9px;
  height: 9px;
  appearance: none;
  border: 1px solid #555;
  background: #fff;
}

input[type="checkbox"]:checked::after {
  content: "";
  display: block;
  width: 3px;
  height: 5px;
  margin-left: 2px;
  border: solid #222;
  border-width: 0 1px 1px 0;
  transform: rotate(40deg);
}

input[type="checkbox"]:disabled {
  border-color: #c4c4c4;
  background: #e3e3e3;
}

/* Object snaps */
.osnaps {
  display: flex;
  align-items: center;
  gap: 5px;
  height: 15px;
  padding: 2px 0 0 5px;
}

.osnaps label {
  display: flex;
  align-items: center;
  gap: 1px;
}

.osnaps .wide {
  gap: 3px;
}

/* Status bar */
.status {
  display: flex;
  height: 13px;
  border-top: 1px solid #d0d8e6;
}

.status > * {
  flex: none;
  border-right: 1px solid #d3dae6;
  text-align: center;
  white-space: nowrap;
}

.status .layer {
  display: flex;
  align-items: center;
  width: 106px;
  padding-left: 2px;
}

.swatch {
  width: 9px;
  height: 9px;
  margin-right: 1px;
  background: #000;
}

.status-on {
  background: #deeffa;
  font-weight: bold;
}

.status .memory {
  flex: 1;
  margin-right: 4px;
  padding-left: 2px;
  text-align: left;
}

.w-25 { width: 25px; }
.w-28 { width: 28px; }
.w-30 { width: 30px; }
.w-32 { width: 32px; }
.w-37 { width: 37px; }
.w-41 { width: 41px; }
.w-46 { width: 46px; }
.w-55 { width: 55px; }
.w-58 { width: 58px; }
```

FILE: grid.js
```js
// Projects the construction plane through the camera shown in the panel
const distance = 99.564;
const focal = 329;
const extent = 70;

function project(x, y) {
  const depth = distance - 0.433 * x + 0.75 * y;
  const px = focal * (0.866 * x + 0.5 * y) / depth;
  const py = -focal * (-0.25 * x + 0.433 * y) / depth;
  return px.toFixed(2) + ' ' + py.toFixed(2);
}

function line(x1, y1, x2, y2) {
  return 'M' + project(x1, y1) + 'L' + project(x2, y2);
}

function setPath(id, d) {
  document.getElementById(id).setAttribute('d', d);
}

let minor = '';
let major = '';
for (let i = -extent; i <= extent; i++) {
  const d = line(i, -extent, i, extent) + line(-extent, i, extent, i);
  if (i % 5 === 0) major += d;
  else minor += d;
}

setPath('persp-minor', minor);
setPath('persp-major', major);
setPath('persp-plane', line(-extent, -extent, -extent, extent) + 'L' + project(extent, extent) + 'L' + project(extent, -extent) + 'Z');
setPath('persp-x', line(0, 0, extent, 0));
setPath('persp-y', line(0, 0, 0, extent));
```
